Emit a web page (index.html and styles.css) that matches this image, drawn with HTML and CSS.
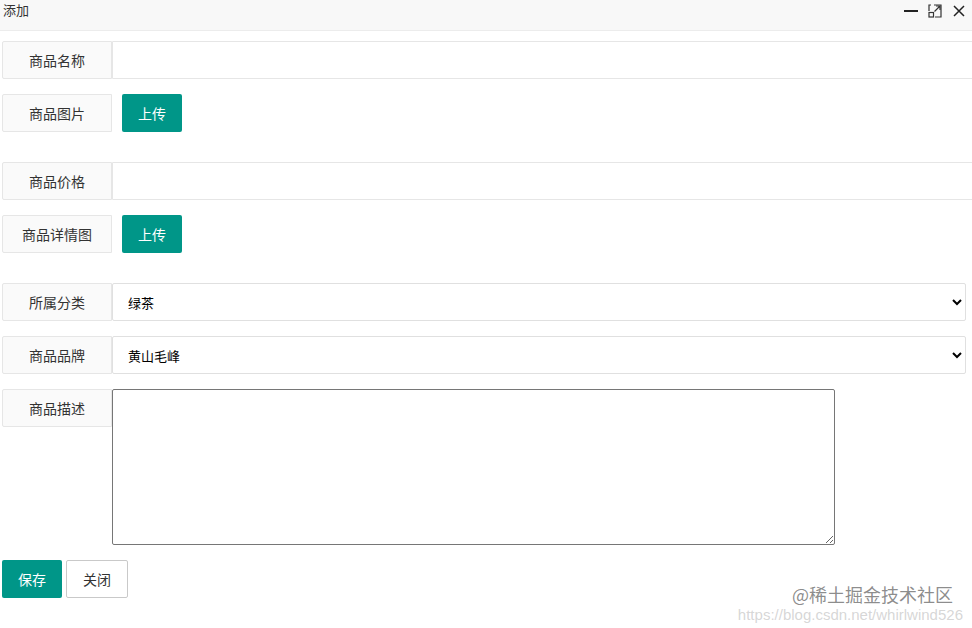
FILE: index.html
```html
<!DOCTYPE html>
<html lang="zh-CN">
<head>
  <meta charset="UTF-8">
  <title>添加</title>
  <link rel="stylesheet" href="styles.css">
</head>
<body>
  <div class="titlebar">
    <span class="title">添加</span>
    <div class="tools">
      <svg class="tool" viewBox="0 0 14 14" width="14" height="14"><path d="M0 7 H14" stroke="#222" stroke-width="2"/></svg>
      <svg class="tool" viewBox="0 0 14 14" width="14" height="14" fill="none" stroke="#333" stroke-width="1.2">
        <path d="M6 1 H13 V13 H7"/>
        <path d="M1 7 V1 H3"/>
        <rect x="1" y="8.5" width="4.5" height="4.5"/>
        <path d="M6.5 7.5 L12 2 M8 2 H12 V6"/>
      </svg>
      <svg class="tool" viewBox="0 0 14 14" width="14" height="14"><path d="M2 2 L12 12 M12 2 L2 12" stroke="#222" stroke-width="1.5"/></svg>
    </div>
  </div>

  <form class="form">
    <div class="item">
      <label class="label">商品名称</label>
      <input class="input wide" type="text">
    </div>
    <div class="item upload">
      <label class="label">商品图片</label>
      <button type="button" class="btn">上传</button>
    </div>
    <div class="item">
      <label class="label">商品价格</label>
      <input class="input wide" type="text">
    </div>
    <div class="item upload">
      <label class="label">商品详情图</label>
      <button type="button" class="btn">上传</button>
    </div>
    <div class="item">
      <label class="label">所属分类</label>
      <select class="select">
        <option>绿茶</option>
      </select>
    </div>
    <div class="item">
      <label class="label">商品品牌</label>
      <select class="select">
        <option>黄山毛峰</option>
      </select>
    </div>
    <div class="item area">
      <label class="label">商品描述</label>
      <textarea class="textarea"></textarea>
    </div>
    <div class="actions">
      <button type="button" class="btn">保存</button>
      <button type="button" class="btn plain">关闭</button>
    </div>
  </form>

  <div class="watermark">
    <div class="wm-main">@稀土掘金技术社区</div>
    <div class="wm-url">https://blog.csdn.net/whirlwind526</div>
  </div>
</body>
</html>
```

FILE: styles.css
```css
body { margin: 0; background: #fff; font-family: "Noto Sans CJK SC", "Liberation Sans", sans-serif; color: #333; overflow: hidden; }
.titlebar { height: 31px; background: #f8f8f8; border-bottom: 1px solid #ececec; display: flex; justify-content: space-between; align-items: flex-start; box-sizing: border-box; }
.title { font-size: 13px; line-height: 17px; padding: 1px 0 0 3px; color: #333; }
.tools { display: flex; gap: 10px; padding: 4px 6px 0 0; }
.tool { display: block; }

.form { padding: 10px 0 0 2px; }
.item { display: flex; height: 38px; margin-bottom: 15px; margin-right: -10px; }
.item.upload { margin-bottom: 30px; }
.item.area { height: auto; align-items: flex-start; }
.label { width: 110px; height: 38px; flex: none; box-sizing: border-box; border: 1px solid #e6e6e6; border-radius: 2px 0 0 2px; background: #fafafa; font-size: 14px; line-height: 36px; text-align: center; color: #333; }
.input { flex: 1; height: 38px; box-sizing: border-box; border: 1px solid #e6e6e6; border-radius: 0 2px 2px 0; outline: none; padding: 0 10px; font-size: 13px; }
.select { width: 854px; height: 38px; box-sizing: border-box; border: 1px solid #e0e0e0; border-radius: 2px; background: #fff; padding: 0 8px 0 11px; font-family: inherit; font-size: 13px; color: #000; }
.textarea { width: 723px; height: 156px; box-sizing: border-box; border: 1px solid #767676; border-radius: 2px; margin: 0; }

.btn { height: 38px; width: 60px; border: none; border-radius: 2px; background: #009688; color: #fff; font-family: inherit; font-size: 14px; padding: 0; cursor: pointer; }
.upload .btn { margin-left: 10px; }
.actions { display: flex; gap: 4px; }
.btn.plain { width: 62px; background: #fff; color: #333; border: 1px solid #c9c9c9; }

.watermark { position: absolute; right: 9px; top: 585px; text-align: right; }
.wm-main { font-size: 18px; line-height: 18px; color: rgba(90, 90, 90, 0.7); margin-right: 10px; }
.wm-url { font-family: "Liberation Sans", sans-serif; font-size: 15px; line-height: 15px; color: rgba(180, 180, 180, 0.55); margin-top: 4px; }
```
